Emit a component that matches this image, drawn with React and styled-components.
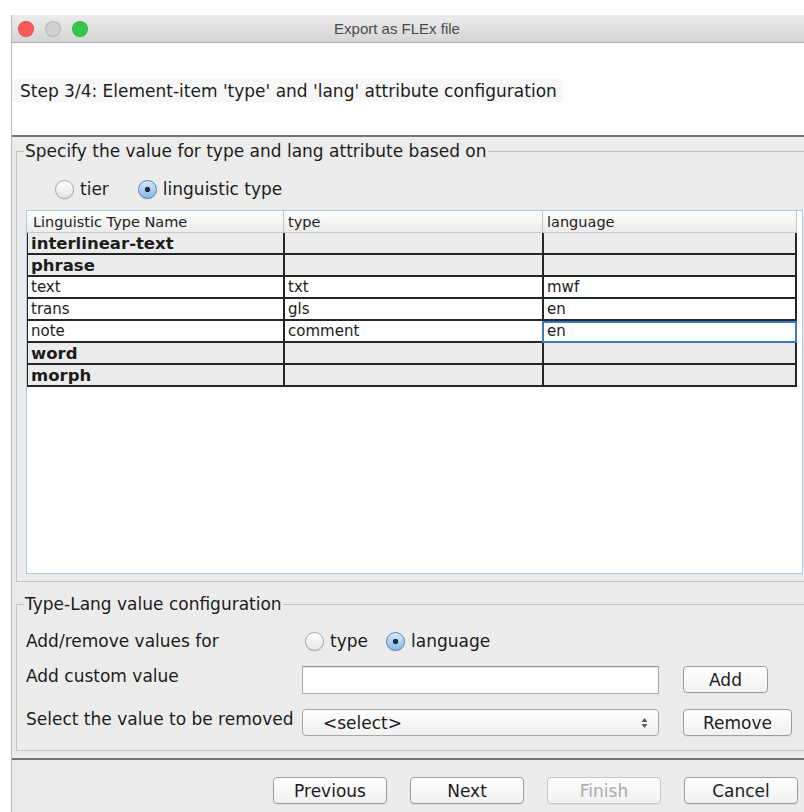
import React from 'react';
import styled, { createGlobalStyle } from 'styled-components';

const GlobalStyle = createGlobalStyle`
    html, body {
        margin: 0;
        padding: 0;
        background: #ffffff;
        overflow: hidden;
    }
    body {
        font-family: "DejaVu Sans", "Liberation Sans", sans-serif;
        color: #1c1c1c;
    }
`;

const Window = styled.div`
    margin: 15px 0 0 11px;
    width: 800px;
    height: 797px;
    display: flex;
    flex-direction: column;
    border-left: 1px solid #b9b9b9;
    background: #ececec;
`;

const TitleBar = styled.div`
    height: 27px;
    flex-shrink: 0;
    display: flex;
    align-items: center;
    background: linear-gradient(#ececec, #d5d5d5);
    border-bottom: 1px solid #b1b1b1;
`;

const Lights = styled.div`
    display: flex;
    gap: 11px;
    padding-left: 6px;
    width: 70px;
`;

const Light = styled.span`
    width: 16px;
    height: 16px;
    border-radius: 50%;
    background: ${(p) => p.$color};
    box-shadow: inset 0 0 0 1px rgba(0, 0, 0, 0.12);
`;

const Title = styled.div`
    flex: 1;
    text-align: center;
    padding-right: 106px;
    font-family: "Liberation Sans", Arial, sans-serif;
    font-size: 15px;
    color: #4b4b4b;
`;

const Header = styled.div`
    height: 94px;
    flex-shrink: 0;
    box-sizing: border-box;
    padding-top: 36px;
    background: #ffffff;
    border-bottom: 2px solid #767676;
`;

const StepLabel = styled.div`
    display: inline-block;
    padding: 2px 6px 1px 8px;
    background: #f7f7f7;
    font-size: 17px;
    line-height: 20px;
`;

const Content = styled.div`
    padding: 4px 0 0 4px;
`;

const Group = styled.fieldset`
    margin: ${(p) => p.$top}px 0 0;
    padding: 0 8px ${(p) => p.$bottom}px 9px;
    border: 1px solid #c3c3c3;
    min-width: 0;
`;

const Legend = styled.legend`
    margin-left: -2px;
    padding: 0 1px;
    font-size: 17px;
    line-height: 20px;
`;

const RadioGroup = styled.div`
    display: flex;
    align-items: center;
    gap: ${(p) => p.$gap}px;
    padding: ${(p) => p.$pad};
    height: 20px;
`;

const RadioOption = styled.label`
    display: flex;
    align-items: center;
    gap: 6px;
    font-size: 17px;
`;

const RadioCircle = styled.span`
    width: 19px;
    height: 19px;
    box-sizing: border-box;
    border-radius: 50%;
    border: 1px solid ${(p) => (p.$on ? '#5d7fae' : '#a6a6a6')};
    background: ${(p) =>
        p.$on
            ? 'radial-gradient(circle, #1d2b3c 0 2.4px, transparent 3px), linear-gradient(#d6e8fb, #86b8ec)'
            : 'linear-gradient(#ffffff, #e4e4e4)'};
    box-shadow: 0 1px 1px rgba(0, 0, 0, 0.08);
`;

const ScrollArea = styled.div`
    margin-top: 11px;
    height: 364px;
    box-sizing: border-box;
    border: 1px solid #a8cbe7;
    background: #ffffff;
    padding-right: 4px;
`;

const Grid = styled.div`
    display: grid;
    grid-template-columns: 256px 259px 255px;
`;

const HeadCell = styled.div`
    height: 22px;
    box-sizing: border-box;
    padding: 0 0 0 ${(p) => p.$pad}px;
    display: flex;
    align-items: center;
    font-size: 14.5px;
    color: #222222;
    background: linear-gradient(#ffffff, #ebebeb);
    border-bottom: 1px solid #c9c9c9;
    border-left: ${(p) => (p.$sep ? '1px solid #c4c4c4' : 'none')};
    border-right: ${(p) => (p.$last ? '1px solid #c4c4c4' : 'none')};
`;

const Cell = styled.div`
    height: 22px;
    box-sizing: border-box;
    padding-left: 3px;
    display: flex;
    align-items: center;
    white-space: nowrap;
    font-size: ${(p) => (p.$bold ? 16.5 : 15)}px;
    font-weight: ${(p) => (p.$bold ? 'bold' : 'normal')};
    background: ${(p) => (p.$bold ? '#ececec' : '#ffffff')};
    border-bottom: 2px solid #262626;
    border-left: ${(p) => (p.$first ? '1px solid #262626' : '2px solid #262626')};
    border-right: ${(p) => (p.$last ? '2px solid #262626' : 'none')};
    outline: ${(p) => (p.$focus ? '2px solid #3f78bd' : 'none')};
    outline-offset: -2px;
`;

const FormGrid = styled.div`
    display: grid;
    grid-template-columns: 276px 357px auto;
    row-gap: 15px;
    padding-top: 16px;
    align-items: start;
`;

const FieldLabel = styled.div`
    font-size: 17px;
    line-height: 20px;
    padding-top: ${(p) => p.$top || 0}px;
`;

const TextField = styled.input`
    height: 28px;
    box-sizing: border-box;
    border: 1px solid #a9a9a9;
    border-top-color: #8f8f8f;
    background: #ffffff;
    box-shadow: inset 0 1px 1px rgba(0, 0, 0, 0.08);
    outline: none;
`;

const SelectBox = styled.div`
    height: 27px;
    box-sizing: border-box;
    display: flex;
    align-items: center;
    justify-content: space-between;
    padding: 0 10px 0 20px;
    border: 1px solid #a6a6a6;
    border-radius: 4px;
    background: linear-gradient(#ffffff, #f0f0f0);
    font-size: 17px;
`;

const Button = styled.button`
    height: 27px;
    width: ${(p) => p.$w}px;
    box-sizing: border-box;
    margin-left: ${(p) => p.$ml || 0}px;
    padding: 0;
    border: 1px solid ${(p) => (p.disabled ? '#c6c6c6' : '#9d9d9d')};
    border-radius: 4px;
    background: linear-gradient(#ffffff, #f1f1f1);
    font-family: "DejaVu Sans", "Liberation Sans", sans-serif;
    font-size: 17px;
    color: ${(p) => (p.disabled ? '#ababab' : '#1c1c1c')};
    box-shadow: 0 1px 0 rgba(0, 0, 0, 0.05);
`;

const ButtonBar = styled.div`
    margin-top: 7px;
    border-top: 2px solid #767676;
    padding: 17px 14px 0 0;
    display: flex;
    justify-content: flex-end;
    gap: 23px;
`;

const rows = [
    { name: 'interlinear-text', bold: true },
    { name: 'phrase', bold: true },
    { name: 'text', type: 'txt', lang: 'mwf' },
    { name: 'trans', type: 'gls', lang: 'en' },
    { name: 'note', type: 'comment', lang: 'en', focus: true },
    { name: 'word', bold: true },
    { name: 'morph', bold: true },
];

const Radio = ({ on, children }) => (
    <RadioOption>
        <RadioCircle $on={on} />
        {children}
    </RadioOption>
);

const Arrows = () => (
    <svg width="7" height="12" viewBox="0 0 7 12">
        <path d="M3.5 1 L6.5 5 L0.5 5 Z" fill="#5a5a5a" />
        <path d="M3.5 11 L6.5 7 L0.5 7 Z" fill="#5a5a5a" />
    </svg>
);

const App = () => {
    return (
        <>
            <GlobalStyle />
            <Window>
                <TitleBar>
                    <Lights>
                        <Light $color="#fc5b57" />
                        <Light $color="#d0d0d0" />
                        <Light $color="#34c84a" />
                    </Lights>
                    <Title>Export as FLEx file</Title>
                </TitleBar>
                <Header>
                    <StepLabel>
                        Step 3/4: Element-item 'type' and 'lang' attribute configuration
                    </StepLabel>
                </Header>
                <Content>
                    <Group $top={0} $bottom={7}>
                        <Legend>Specify the value for type and lang attribute based on</Legend>
                        <RadioGroup $gap={29} $pad="18px 0 0 29px">
                            <Radio>tier</Radio>
                            <Radio on>linguistic type</Radio>
                        </RadioGroup>
                        <ScrollArea>
                            <Grid>
                                <HeadCell $pad={6}>Linguistic Type Name</HeadCell>
                                <HeadCell $pad={4} $sep>type</HeadCell>
                                <HeadCell $pad={4} $sep $last>language</HeadCell>
                                {rows.map((row) => (
                                    <React.Fragment key={row.name}>
                                        <Cell $bold={row.bold} $first>{row.name}</Cell>
                                        <Cell $bold={row.bold}>{row.type}</Cell>
                                        <Cell $bold={row.bold} $last $focus={row.focus}>
                                            {row.lang}
                                        </Cell>
                                    </React.Fragment>
                                ))}
                            </Grid>
                        </ScrollArea>
                    </Group>
                    <Group $top={12} $bottom={14}>
                        <Legend>Type-Lang value configuration</Legend>
                        <FormGrid>
                            <FieldLabel $top={1}>Add/remove values for</FieldLabel>
                            <RadioGroup $gap={18} $pad="1px 0 0 3px">
                                <Radio>type</Radio>
                                <Radio on>language</Radio>
                            </RadioGroup>
                            <div />
                            <FieldLabel $top={0}>Add custom value</FieldLabel>
                            <TextField />
                            <Button $w={85} $ml={24}>Add</Button>
                            <FieldLabel $top={0}>Select the value to be removed</FieldLabel>
                            <SelectBox>
                                <span>&lt;select&gt;</span>
                                <Arrows />
                            </SelectBox>
                            <Button $w={109} $ml={24}>Remove</Button>
                        </FormGrid>
                    </Group>
                </Content>
                <ButtonBar>
                    <Button $w={114}>Previous</Button>
                    <Button $w={114}>Next</Button>
                    <Button $w={114} disabled>Finish</Button>
                    <Button $w={114}>Cancel</Button>
                </ButtonBar>
            </Window>
        </>
    );
};

export default App;
